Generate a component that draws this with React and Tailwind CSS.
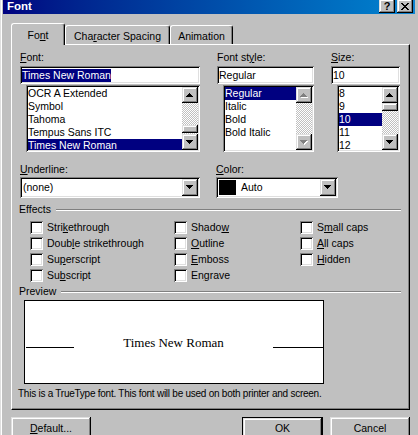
import React from "react";

// win98 style bevels
const sunken =
  "shadow-[inset_1px_1px_0_#808080,inset_-1px_-1px_0_#ffffff,inset_2px_2px_0_#000000,inset_-2px_-2px_0_#dfdfdf]";
const raised =
  "shadow-[inset_-1px_-1px_0_#000000,inset_1px_1px_0_#dfdfdf,inset_-2px_-2px_0_#808080,inset_2px_2px_0_#ffffff]";
const checker =
  "bg-[conic-gradient(#ffffff_25%,#c0c0c0_0_50%,#ffffff_0_75%,#c0c0c0_0)] bg-[length:2px_2px]";

function Acc({ text, at = -1 }) {
  if (at < 0) return text;
  return (
    <>
      {text.slice(0, at)}
      <span className="underline underline-offset-[1px]">{text[at]}</span>
      {text.slice(at + 1)}
    </>
  );
}

function Arrow({ dir = "up", disabled = false }) {
  const rows = [0, 1, 2, 3].map((i) =>
    dir === "up" ? { y: i, x: 3 - i, w: 2 * i + 1 } : { y: i, x: i, w: 7 - 2 * i }
  );
  return (
    <svg width="8" height="5" viewBox="0 0 8 5" shapeRendering="crispEdges">
      {disabled &&
        rows.map((r) => (
          <rect key={"s" + r.y} x={r.x + 1} y={r.y + 1} width={r.w} height="1" fill="#ffffff" />
        ))}
      {rows.map((r) => (
        <rect key={r.y} x={r.x} y={r.y} width={r.w} height="1" fill={disabled ? "#808080" : "#000000"} />
      ))}
    </svg>
  );
}

function ScrollBar({ thumb, disabled }) {
  return (
    <div className="w-[16px] flex flex-col shrink-0">
      <div className={`h-[16px] bg-[#c0c0c0] flex items-center justify-center ${raised}`}>
        <Arrow dir="up" disabled={disabled} />
      </div>
      <div className={`flex-1 flex flex-col ${checker}`}>
        {thumb && <div className={`h-[8px] bg-[#c0c0c0] ${raised} ${thumb}`} />}
      </div>
      <div className={`h-[16px] bg-[#c0c0c0] flex items-center justify-center ${raised}`}>
        <Arrow dir="down" disabled={disabled} />
      </div>
    </div>
  );
}

function ListBox({ items, sel, className, thumb, disabled }) {
  return (
    <div className={`flex h-[67px] bg-white p-[2px] ${sunken} ${className}`}>
      <div className="flex-1 flex flex-col min-w-0 overflow-hidden">
        {items.map((it, i) => (
          <div
            key={i}
            className={`h-[13px] leading-[13px] shrink-0 whitespace-nowrap ${
              it === sel ? "bg-[#000080] text-white" : ""
            }`}
          >
            {it}
          </div>
        ))}
      </div>
      <ScrollBar thumb={thumb} disabled={disabled} />
    </div>
  );
}

function TextBox({ children, className }) {
  return (
    <div className={`h-[18px] bg-white px-[2px] flex items-center ${sunken} ${className}`}>
      {children}
    </div>
  );
}

function Combo({ children, className }) {
  return (
    <div className={`flex h-[21px] bg-white p-[2px] ${sunken} ${className}`}>
      <div className="flex-1 flex items-center">{children}</div>
      <div className={`w-[16px] h-[17px] bg-[#c0c0c0] flex items-center justify-center ${raised}`}>
        <Arrow dir="down" />
      </div>
    </div>
  );
}

function Check({ label, at }) {
  return (
    <div className="h-[16px] flex items-center gap-[4px]">
      <div className={`w-[13px] h-[13px] bg-white shrink-0 ${sunken}`} />
      <span className="leading-[13px] whitespace-nowrap">
        <Acc text={label} at={at} />
      </span>
    </div>
  );
}

function GroupLine({ label }) {
  return (
    <div className="h-[13px] flex items-center">
      <span className="leading-[13px] -ml-[1px]">{label}</span>
      <div className="flex-1 ml-[5px] mr-[8px] border-t border-t-[#808080] border-b border-b-white" />
    </div>
  );
}

const effects = [
  [
    ["Strikethrough", 4],
    ["Double strikethrough", 4],
    ["Superscript", 2],
    ["Subscript", 2],
  ],
  [
    ["Shadow", 5],
    ["Outline", 0],
    ["Emboss", 0],
    ["Engrave", 2],
  ],
  [
    ["Small caps", 1],
    ["All caps", 0],
    ["Hidden", 0],
  ],
];

export default function App() {
  return (
    <div className="w-[418px] h-[435px] overflow-hidden bg-[#c0c0c0] pl-[3px] text-black text-[10.5px] font-['Liberation_Sans',Arial,sans-serif] shadow-[inset_1px_0_0_#dfdfdf,inset_2px_0_0_#ffffff]">
      {/* title bar */}
      <div className="w-[412px] h-[14px] bg-linear-to-r from-[#000080] to-[#1084d0] flex justify-between">
        <span className="pl-[4px] text-white font-bold text-[11.5px] leading-[13px]">Font</span>
        <div className="flex gap-[2px] pr-[2px] -mt-[1px]">
          <div className={`w-[16px] h-[14px] bg-[#c0c0c0] flex items-center justify-center font-bold text-[11px] leading-none ${raised}`}>
            ?
          </div>
          <div className={`w-[16px] h-[14px] bg-[#c0c0c0] flex items-center justify-center ${raised}`}>
            <svg width="8" height="7" viewBox="0 0 8 7" shapeRendering="crispEdges">
              <path d="M0 0h2v1h-2zM1 1h2v1h-2zM2 2h4v1h-4zM3 3h2v1h-2zM2 4h4v1h-4zM1 5h2v1h-2zM0 6h2v1h-2z" fill="#000" />
              <path d="M6 0h2v1h-2zM5 1h2v1h-2zM5 5h2v1h-2zM6 6h2v1h-2z" fill="#000" />
            </svg>
          </div>
        </div>
      </div>

      <div className="ml-[8px]">
        {/* tabs */}
        <div className="mt-[9px] h-[21px] flex items-end">
          <div className="relative z-10 w-[54px] h-[22px] -mb-[1px] bg-[#c0c0c0] border-l border-t border-white border-r border-r-black rounded-t-[3px] shadow-[inset_-1px_0_0_#808080] flex justify-center pt-[5px] leading-[13px]">
            <Acc text="Font" at={2} />
          </div>
          <div className="w-[105px] h-[19px] bg-[#c0c0c0] border-l border-t border-white border-r border-r-black rounded-t-[3px] shadow-[inset_-1px_0_0_#808080] flex justify-center pt-[4px] leading-[13px]">
            <Acc text="Character Spacing" at={3} />
          </div>
          <div className="w-[63px] h-[19px] bg-[#c0c0c0] border-l border-t border-white border-r border-r-black rounded-t-[3px] shadow-[inset_-1px_0_0_#808080] flex justify-center pt-[4px] leading-[13px]">
            Animation
          </div>
        </div>

        {/* panel */}
        <div className="w-[399px] h-[366px] border-t border-l border-white border-r border-b border-r-black border-b-black shadow-[inset_-1px_-1px_0_#808080] pl-[8px] pt-[6px]">
          <div className="flex gap-[17px] leading-[13px]">
            <div className="w-[180px]">
              <div className="h-[13px]"><Acc text="Font:" at={0} /></div>
              <TextBox className="mt-[2px]">
                <span className="bg-[#000080] text-white leading-[13px]">Times New Roman</span>
              </TextBox>
              <ListBox
                className="mt-[1px] ml-[6px]"
                items={["OCR A Extended", "Symbol", "Tahoma", "Tempus Sans ITC", "Times New Roman"]}
                sel="Times New Roman"
                thumb="mt-[22px]"
              />
            </div>
            <div className="w-[97px]">
              <div className="h-[13px]"><Acc text="Font style:" at={7} /></div>
              <TextBox className="mt-[2px]">Regular</TextBox>
              <ListBox
                className="mt-[1px] ml-[6px]"
                items={["Regular", "Italic", "Bold", "Bold Italic"]}
                sel="Regular"
                disabled
              />
            </div>
            <div className="w-[69px]">
              <div className="h-[13px]"><Acc text="Size:" at={0} /></div>
              <TextBox className="mt-[2px]">10</TextBox>
              <ListBox
                className="mt-[1px] ml-[6px]"
                items={["8", "9", "10", "11", "12"]}
                sel="10"
                thumb="mt-0"
              />
            </div>
          </div>

          {/* underline / color */}
          <div className="mt-[11px] flex gap-[16px] leading-[13px]">
            <div className="w-[180px]">
              <div className="h-[13px]"><Acc text="Underline:" at={0} /></div>
              <Combo className="mt-[1px]">
                <span className="pl-[1px]">(none)</span>
              </Combo>
            </div>
            <div className="w-[122px]">
              <div className="h-[13px]"><Acc text="Color:" at={0} /></div>
              <Combo className="mt-[1px]">
                <div className="w-[17px] h-[15px] bg-black ml-[1px]" />
                <span className="ml-[5px]">Auto</span>
              </Combo>
            </div>
          </div>

          {/* effects */}
          <div className="mt-[5px]">
            <GroupLine label="Effects" />
          </div>
          <div className="mt-[3px] flex">
            {effects.map((col, ci) => (
              <div
                key={ci}
                className={ci === 0 ? "ml-[10px] w-[144px]" : ci === 1 ? "w-[126px]" : "flex-1"}
              >
                {col.map(([l, a]) => (
                  <Check key={l} label={l} at={a} />
                ))}
              </div>
            ))}
          </div>

          {/* preview */}
          <div className="mt-[2px]">
            <GroupLine label="Preview" />
          </div>
          <div className="mt-[2px] ml-[4px] w-[300px] h-[84px] bg-white border border-black flex items-center">
            <div className="ml-[1px] w-[48px] h-[1px] bg-black mt-[10px]" />
            <div className="flex-1 text-center font-['Liberation_Serif','Times_New_Roman',serif] text-[13px] leading-[15px]">
              Times New Roman
            </div>
            <div className="w-[50px] h-[1px] bg-black mt-[10px]" />
          </div>
          <div className="mt-[3px] -ml-[2px] h-[13px] leading-[13px] whitespace-nowrap text-[10px] tracking-[-0.25px]">
            This is a TrueType font. This font will be used on both printer and screen.
          </div>
        </div>

        {/* buttons */}
        <div className="mt-[7px] flex">
          <div className={`w-[80px] h-[23px] flex items-center justify-center ${raised}`}>
            <Acc text="Default..." at={0} />
          </div>
          <div className="ml-[151px] w-[81px] h-[23px] border border-black">
            <div className={`w-full h-full flex items-center justify-center ${raised}`}>OK</div>
          </div>
          <div className={`ml-[7px] w-[80px] h-[23px] flex items-center justify-center ${raised}`}>
            Cancel
          </div>
        </div>
      </div>
    </div>
  );
}
